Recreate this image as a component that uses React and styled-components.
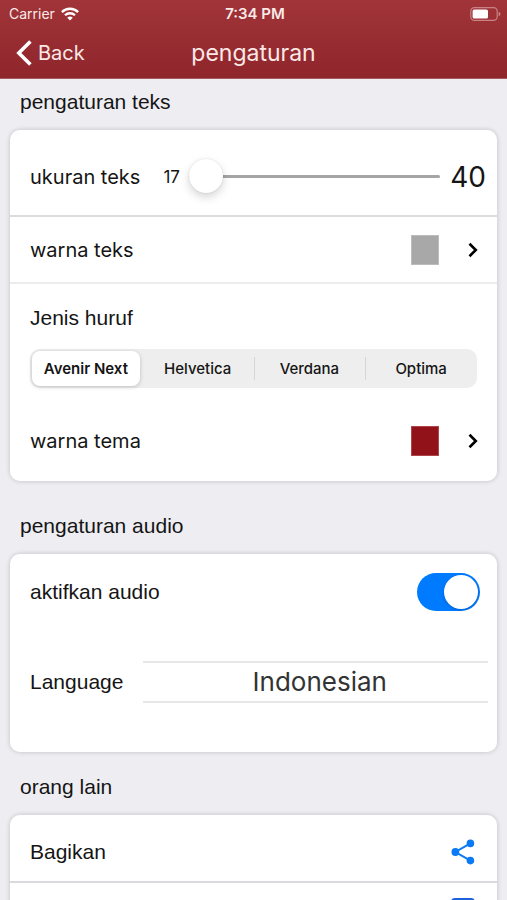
import React, { useState } from "react"
import styled, { createGlobalStyle } from "styled-components"

const GlobalStyle = createGlobalStyle`
  * {
    box-sizing: border-box;
  }

  body {
    margin: 0;
    background: #eeedf2;
    color: #151515;
    font-family: "Liberation Sans", Helvetica, Arial, sans-serif;
    font-size: 21px;
    line-height: 24px;
  }

  button, input, select {
    margin: 0;
    padding: 0;
    border: 0;
    background: none;
    color: inherit;
    font: inherit;
  }
`

const system = `"Inter", -apple-system, sans-serif`

const Screen = styled.div`
  display: flex;
  flex-direction: column;
  height: 100vh;
`

const Header = styled.header`
  flex: none;
  background: linear-gradient(#a03439, #8f262b);
  border-bottom: 1px solid #a5595e;
  color: #fbe9e7;
  font-family: ${system};
`

const StatusBar = styled.div`
  display: grid;
  grid-template-columns: 1fr auto 1fr;
  align-items: center;
  height: 27px;
  padding: 0 6px 0 9px;
  font-size: 14px;
`

const Carrier = styled.div`
  display: flex;
  align-items: center;
  gap: 6px;
`

const Time = styled.time`
  font-size: 15px;
  font-weight: 600;
`

const Battery = styled.svg`
  justify-self: end;
`

const NavBar = styled.nav`
  display: grid;
  grid-template-columns: 1fr auto 1fr;
  align-items: center;
  height: 51px;
  padding: 0 16px;
`

const BackButton = styled.button`
  display: flex;
  align-items: center;
  justify-self: start;
  gap: 6px;
  font-size: 20px;
`

const Title = styled.h1`
  margin: 0;
  font-size: 23px;
  font-weight: 400;
`

const Content = styled.main`
  flex: 1;
  min-height: 0;
  padding: 0 10px;
  overflow-y: auto;
  scrollbar-width: none;
`

const SectionTitle = styled.h2`
  margin: ${(props) => props.$space}px 10px 16px;
  font-size: 21px;
  font-weight: 400;
`

const Card = styled.section`
  overflow: hidden;
  border-radius: 10px;
  background: #fff;
`

const CardShadow = styled.div`
  border-radius: 10px;
  box-shadow: 0 0 5px rgba(0, 0, 0, 0.2);
`

const Row = styled.div`
  display: flex;
  align-items: center;
  width: 100%;
  height: ${(props) => props.$height}px;
  padding: ${(props) => props.$top || 0}px ${(props) => props.$right || 20}px 0 20px;
  border-bottom: ${(props) => (props.$line ? `2px solid ${props.$line}` : 0)};
  text-align: left;
`

const Label = styled.label`
  flex: 1;
  font-family: ${(props) => (props.$system ? system : "inherit")};
  font-size: ${(props) => (props.$system ? 20 : 21)}px;
`

const SizeLabel = styled(Label)`
  flex: none;
  margin-right: 23px;
`

const MinSize = styled.span`
  margin-right: 9px;
  font-family: ${system};
  font-size: 17px;
`

const MaxSize = styled.span`
  margin-left: 10px;
  font-family: ${system};
  font-size: 28px;
`

const Slider = styled.input`
  flex: 1;
  min-width: 0;
  height: 34px;
  appearance: none;

  &::-webkit-slider-runnable-track {
    height: 3px;
    border-radius: 2px;
    background: #a5a5a5;
  }

  &::-webkit-slider-thumb {
    width: 34px;
    height: 34px;
    margin-top: -16px;
    appearance: none;
    border-radius: 50%;
    background: #fff;
    box-shadow: 0 4px 10px rgba(0, 0, 0, 0.17), 0 0 2px rgba(0, 0, 0, 0.12);
  }
`

const Swatch = styled.span`
  width: 28px;
  height: 30px;
  margin-right: 29px;
  border: 1px solid ${(props) => props.$edge};
  background: ${(props) => props.$color};
`

const FontGroup = styled.fieldset`
  min-width: 0;
  margin: 0 0 13px;
  padding: 22px 20px 0;
  border: 0;
`

const Legend = styled.legend`
  float: left;
  width: 100%;
  margin-bottom: 19px;
  padding: 0;
`

const Segments = styled.div`
  display: grid;
  grid-template-columns: repeat(4, 1fr);
  clear: both;
  height: 39px;
  border-radius: 10px;
  background: #eee;
`

const SegmentText = styled.span`
  display: flex;
  align-items: center;
  justify-content: center;
  width: 100%;
  border-radius: 8px;
`

const Segment = styled.label`
  display: flex;
  position: relative;
  padding: 2px;
  font-family: ${system};
  font-size: 15px;
  font-weight: 500;
  white-space: nowrap;

  input {
    position: absolute;
    inset: 0;
    appearance: none;
  }

  input:checked + ${SegmentText} {
    background: #fff;
    box-shadow: 0 1px 4px rgba(0, 0, 0, 0.2);
    font-weight: 600;
  }

  &:nth-child(n + 3)::before {
    content: "";
    position: absolute;
    left: 0;
    top: 8px;
    bottom: 8px;
    width: 1px;
    background: #d6d6d6;
  }
`

const Switch = styled.input`
  display: flex;
  align-items: center;
  width: 63px;
  height: 38px;
  padding: 0 2px;
  appearance: none;
  border-radius: 19px;
  background: #ddd;

  &::before {
    content: "";
    width: 34px;
    height: 34px;
    border-radius: 50%;
    background: #fff;
    box-shadow: 0 1px 3px rgba(0, 0, 0, 0.2);
  }

  &:checked {
    justify-content: flex-end;
    background: #007aff;
  }
`

const LanguageLabel = styled(Label)`
  flex: none;
  margin-right: 20px;
`

const Picker = styled.select`
  flex: 1;
  min-width: 0;
  height: 42px;
  padding-left: 8px;
  appearance: none;
  border: solid #e6e6e6;
  border-width: 2px 0;
  border-radius: 0;
  color: #333;
  font-family: ${system};
  font-size: 26px;
  text-align-last: center;
`

const Chevron = () => (
  <svg width="10" height="16" viewBox="0 0 10 16" fill="none" stroke="#000" strokeWidth="2.6">
    <path d="M1.5 1.8 7.8 8 1.5 14.2" />
  </svg>
)

const WifiIcon = () => (
  <svg width="18" height="14" viewBox="0 0 18 14" fill="none" stroke="#fff" strokeWidth="2.3">
    <path d="M.9 5.1a11.5 11.5 0 0 1 16.2 0M4 8.3a7.1 7.1 0 0 1 10 0" />
    <path d="M9 13.6 6.2 10.8a4 4 0 0 1 5.6 0z" fill="#fff" stroke="none" />
  </svg>
)

const ColorRow = ({ label, color, edge, height, line }) => (
  <Row as="button" type="button" $height={height} $right={19} $line={line}>
    <Label as="span" $system>{label}</Label>
    <Swatch $color={color} $edge={edge} />
    <Chevron />
  </Row>
)

const fonts = ["Avenir Next", "Helvetica", "Verdana", "Optima"]

const App = () => {
  const [size, setSize] = useState(17)
  const [font, setFont] = useState(fonts[0])
  const [audio, setAudio] = useState(true)

  return (
    <Screen>
      <GlobalStyle />
      <Header>
        <StatusBar>
          <Carrier>
            Carrier
            <WifiIcon />
          </Carrier>
          <Time>7:34 PM</Time>
          <Battery width="31" height="14" viewBox="0 0 31 14">
            <rect x=".8" y=".6" width="26.4" height="12.8" rx="3.6" fill="none" stroke="#c98387" strokeWidth="1.2" />
            <rect x="2.6" y="2.4" width="15.4" height="9.2" rx="1.6" fill="#fff" />
            <path d="M28.6 4.8q2 .8 2 2.2t-2 2.2z" fill="#c98387" />
          </Battery>
        </StatusBar>
        <NavBar>
          <BackButton type="button">
            <svg width="16" height="26" viewBox="0 0 16 26" fill="none" stroke="#fff" strokeWidth="3.6">
              <path d="M14.4 1.4 2.8 13l11.6 11.6" />
            </svg>
            Back
          </BackButton>
          <Title>pengaturan</Title>
        </NavBar>
      </Header>

      <Content>
        <SectionTitle $space={11}>pengaturan teks</SectionTitle>
        <CardShadow>
          <Card>
            <Row $height={87} $top={8} $right={11} $line="#dcdcdc">
              <SizeLabel $system htmlFor="size">ukuran teks</SizeLabel>
              <MinSize>17</MinSize>
              <Slider
                id="size"
                type="range"
                min="17"
                max="40"
                value={size}
                onChange={(e) => setSize(Number(e.target.value))}
              />
              <MaxSize>40</MaxSize>
            </Row>
            <ColorRow label="warna teks" color="#a8a8a8" edge="#bcbcbc" height={67} line="#ececec" />
            <FontGroup>
              <Legend>Jenis huruf</Legend>
              <Segments>
                {fonts.map((name) => (
                  <Segment key={name}>
                    <input
                      type="radio"
                      name="font"
                      checked={font === name}
                      onChange={() => setFont(name)}
                    />
                    <SegmentText>{name}</SegmentText>
                  </Segment>
                ))}
              </Segments>
            </FontGroup>
            <ColorRow label="warna tema" color="#92121a" edge="#b0444b" height={80} />
          </Card>
        </CardShadow>

        <SectionTitle $space={33}>pengaturan audio</SectionTitle>
        <CardShadow>
          <Card>
            <Row $height={75} $right={17}>
              <Label htmlFor="audio">aktifkan audio</Label>
              <Switch
                id="audio"
                type="checkbox"
                role="switch"
                checked={audio}
                onChange={() => setAudio(!audio)}
              />
            </Row>
            <Row $height={106} $right={9}>
              <LanguageLabel htmlFor="language">Language</LanguageLabel>
              <Picker id="language">
                <option>Indonesian</option>
              </Picker>
            </Row>
            <Row $height={17} />
          </Card>
        </CardShadow>

        <SectionTitle $space={23}>orang lain</SectionTitle>
        <CardShadow>
          <Card>
            <Row as="button" type="button" $height={68} $top={8} $right={22} $line="#d9dadd">
              <Label as="span">Bagikan</Label>
              <svg width="24" height="26" viewBox="0 0 24 26" fill="#0a7af5">
                <path d="M19.4 4.4 4.4 13l15 8.6" fill="none" stroke="#0a7af5" strokeWidth="2" />
                <circle cx="19.4" cy="4.4" r="3.8" />
                <circle cx="4.4" cy="13" r="3.9" />
                <circle cx="19.4" cy="21.6" r="3.8" />
              </svg>
            </Row>
            <Row as="button" type="button" aria-label="Masukan" $height={54} $right={22}>
              <Label as="span" />
              <svg width="24" height="24" viewBox="0 0 24 24">
                <rect width="24" height="24" rx="4" fill="#1d5fdc" />
              </svg>
            </Row>
          </Card>
        </CardShadow>
      </Content>
    </Screen>
  )
}

export default App
